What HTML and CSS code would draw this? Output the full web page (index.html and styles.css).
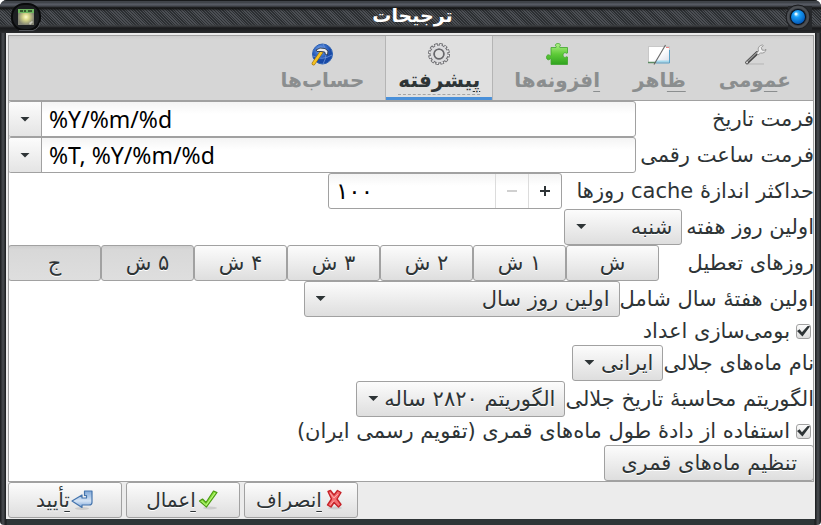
FILE: index.html
```html
<!DOCTYPE html>
<html lang="fa" dir="rtl">
<head>
<meta charset="utf-8">
<title>ترجیحات</title>
<link rel="stylesheet" href="styles.css">
</head>
<body>
<div class="window">
  <header class="titlebar">
    <button class="close" type="button" aria-label="بستن">
      <svg width="28" height="30" viewBox="0 0 28 30">
        <defs><radialGradient id="orb" cx=".4" cy=".3" r=".7"><stop offset="0" stop-color="#8fdcff"/><stop offset=".35" stop-color="#179bf5"/><stop offset="1" stop-color="#0358b8"/></radialGradient></defs>
        <path d="M4 4h24v24H4z" fill="#26282b"/>
        <circle cx="14" cy="15" r="12" fill="#393c40" stroke="#1b1c1f" stroke-width="1"/>
        <circle cx="14" cy="15" r="10" fill="none" stroke="#4c4f54" stroke-width="2"/>
        <circle cx="14" cy="15" r="8" fill="#08101c"/>
        <circle cx="14" cy="15" r="7" fill="url(#orb)"/>
        <circle cx="12" cy="12" r="1.5" fill="#e4f8ff"/>
      </svg>
    </button>
    <h1>ترجیحات</h1>
    <button class="menu" type="button" aria-label="منوی پنجره">
      <svg width="30" height="30" viewBox="0 0 30 30">
        <defs><radialGradient id="sun"><stop offset="0" stop-color="#fffbd0"/><stop offset=".35" stop-color="#dcdc8c"/><stop offset="1" stop-color="#828373"/></radialGradient></defs>
        <rect x="1" y="2" width="28" height="26" rx="12" fill="#1d1f22" stroke="#090a0b" stroke-width="2"/>
        <path d="M8 28.500h14q6-2 7-8" fill="none" stroke="#55585d"/>
        <rect x="7" y="7" width="16" height="16" fill="url(#sun)"/>
        <rect x="7" y="7" width="16" height="4" fill="#6cb45d"/>
        <path d="M9 9h3m1 0h2m2 0h4" stroke="#26401f" stroke-width="1.5"/>
        <path d="M18 21l3-2 1 1-3 3z" fill="#c9c9bd"/>
      </svg>
    </button>
  </header>

  <main class="content">
    <section class="notebook">
      <nav class="tabs" role="tablist">
        <button class="tab" type="button" role="tab">
          <svg width="24" height="24" viewBox="0 0 24 24"><path d="M4 22h17" stroke="#b5b5b5" stroke-width="1"/><path d="M4 20.500L14 11" stroke="#444" stroke-width="3.600" stroke-linecap="round"/><path d="M4 20L14 10.500" stroke="#999" stroke-width="1.200"/><path d="M13.500 11l2-2c-1-3 .5-5.500 4-6l.8.6-2 2 .8 2.500 2.400.2 1.500-1c0 3-3 4.200-5.500 3.700L15 13z" fill="#ededed" stroke="#888" stroke-width=".8"/><circle cx="4" cy="20.500" r="1" fill="#ddd"/></svg>
          <span>ع<u>م</u>ومی</span>
        </button>
        <button class="tab" type="button" role="tab">
          <svg width="24" height="24" viewBox="0 0 24 24"><defs><linearGradient id="pane" x2="1" y2="1"><stop offset=".5" stop-color="#fff"/><stop offset="1" stop-color="#d9dde8"/></linearGradient></defs><rect x="1.500" y="4.500" width="21" height="16" fill="url(#pane)" stroke="#c8c8c8"/><path d="M1 20.500h8" stroke="#5c8b63" stroke-width="1.500"/><path d="M9 19.500h13" stroke="#a4d8ec" stroke-width="2"/><path d="M22.500 8v13H9" fill="none" stroke="#5ba0c6"/><path d="M19 5.500h3" stroke="#e88"/><path d="M18.500 3L7 22.500" stroke="#666" stroke-width="1.100"/></svg>
          <span><u>ظ</u>اهر</span>
        </button>
        <button class="tab" type="button" role="tab">
          <svg width="24" height="24" viewBox="0 0 24 24"><defs><linearGradient id="puz" x2="0" y2="1"><stop offset="0" stop-color="#b0f088"/><stop offset=".5" stop-color="#5fcb38"/><stop offset="1" stop-color="#2fa31f"/></linearGradient></defs><path d="M6 5.500h5c1-1-.6-1-.6-2.300 0-2.200 5-2.200 5 0 0 1.300-1.600 1.300-.6 2.300H22.500v5.500c-1 1-1.500-.5-2.700-.3-2.300.4-2.300 4.300 0 4.700 1.200.2 1.700-1.400 2.700-.4v7.500H6v-5.500c-1-1-1 .8-2.500.8-2.700 0-2.700-5 0-5 1.500 0 1.500 1.700 2.500.7z" fill="url(#puz)" stroke="#3fa52c" stroke-width=".8"/></svg>
          <span><u>ا</u>فزونه‌ها</span>
        </button>
        <button class="tab active" type="button" role="tab" aria-selected="true">
          <svg width="24" height="24" viewBox="0 0 24 24"><circle cx="12" cy="12" r="9.500" fill="none" stroke="#6c6c70" stroke-width="3" stroke-dasharray="3.400 1.574"/><circle cx="12" cy="12" r="7" fill="none" stroke="#6c6c70" stroke-width="5"/><circle cx="12" cy="12" r="9.200" fill="none" stroke="#efeff0" stroke-width="1.800" stroke-dasharray="1.700 3.117" stroke-dashoffset="-.7"/><circle cx="12" cy="12" r="7" fill="none" stroke="#dcdcde" stroke-width="3"/><circle cx="12" cy="12" r="4.800" fill="none" stroke="#68686c" stroke-width="1.600"/></svg>
          <span><u>پ</u>یشرفته</span>
        </button>
        <button class="tab" type="button" role="tab">
          <svg width="24" height="24" viewBox="0 0 24 24"><defs><radialGradient id="globe" cx=".4" cy=".3"><stop offset="0" stop-color="#9abcf2"/><stop offset=".5" stop-color="#4176cf"/><stop offset="1" stop-color="#1849a6"/></radialGradient></defs><circle cx="12.500" cy="12" r="10" fill="url(#globe)" stroke="#2d62b4"/><path d="M3 14q9 5 19-1M13 2q6 10 0 20" fill="none" stroke="#6d94da" stroke-width=".8"/><path d="M3.500 21.500L11.500 10" stroke="#9b6d09" stroke-width="3.600" stroke-linecap="round"/><path d="M3.500 21.500L11.500 10" stroke="#f5c324" stroke-width="2.400" stroke-linecap="round"/><path d="M6 8l4-2 5 .5 3 2.500-.5 4-2-.5-.8-2.500-3.700-.5L7 9.500z" fill="#e9eaed" stroke="#29354a" stroke-width=".9"/></svg>
          <span>حساب‌ها</span>
        </button>
      </nav>

      <form class="page" id="prefs">
        <div class="formats">
          <label for="date">فرمت تاریخ</label>
          <div class="combo"><input id="date" type="text" dir="ltr" value="%Y/%m/%d"><button type="button" aria-label="فهرست فرمت تاریخ"><i class="arrow"></i></button></div>
          <label for="clock">فرمت ساعت رقمی</label>
          <div class="combo"><input id="clock" type="text" dir="ltr" value="%T, %Y/%m/%d"><button type="button" aria-label="فهرست فرمت ساعت"><i class="arrow"></i></button></div>
        </div>
        <div class="row">
          <label class="cache-label" for="cache">حداکثر اندازهٔ cache روزها</label>
          <div class="spin"><button type="button" aria-label="افزایش"><i class="plus"></i></button><button type="button" aria-label="کاهش" disabled><i class="minus"></i></button><input id="cache" type="text" dir="ltr" inputmode="numeric" value="۱۰۰"></div>
        </div>
        <div class="row">
          <label for="first-day">اولین روز هفته</label>
          <div class="select day"><select id="first-day"><option>شنبه</option></select><i class="arrow"></i></div>
        </div>
        <div class="row">
          <span id="holidays">روزهای تعطیل</span>
          <div class="days" role="group" aria-labelledby="holidays">
            <button type="button">ش</button><button type="button">۱ ش</button><button type="button">۲ ش</button><button type="button">۳ ش</button><button type="button">۴ ش</button><button type="button" aria-pressed="true">۵ ش</button><button type="button" aria-pressed="true">ج</button>
          </div>
        </div>
        <div class="row flush">
          <label for="first-week">اولین هفتهٔ سال شامل</label>
          <div class="select week"><select id="first-week"><option>اولین روز سال</option></select><i class="arrow"></i></div>
        </div>
        <label class="check"><input type="checkbox" checked>بومی‌سازی اعداد</label>
        <div class="row flush">
          <label for="months">نام ماه‌های جلالی</label>
          <div class="select months"><select id="months"><option>ایرانی</option></select><i class="arrow"></i></div>
        </div>
        <div class="row flush">
          <label for="algorithm">الگوریتم محاسبهٔ تاریخ جلالی</label>
          <div class="select algorithm"><select id="algorithm"><option>الگوریتم ۲۸۲۰ ساله</option></select><i class="arrow"></i></div>
        </div>
        <label class="check"><input type="checkbox" checked>استفاده از دادهٔ طول ماه‌های قمری (تقویم رسمی ایران)</label>
        <div class="row"><button class="button" type="button">تنظیم ماه‌های قمری</button></div>
      </form>
    </section>

    <footer class="actions">
      <button class="button" type="button"><svg width="24" height="24" viewBox="0 0 24 24"><ellipse cx="13" cy="20" rx="7" ry="1.500" fill="#ccc"/><path d="M6 3.500l2.500-1L12 7l3.500-4.500L19 4.500 15 11l4 5.500-2.500 2.500-4.500-4.500L9 19l-3.500-2L9.500 11z" fill="#f46d70" stroke="#c52127" stroke-width="1.400" stroke-linejoin="round"/><path d="M8 5l4 5 4-4M8.500 16.500l3.500-4" fill="none" stroke="#fba9a9"/></svg><span><u>ا</u>نصراف</span></button>
      <button class="button" type="button"><svg width="24" height="24" viewBox="0 0 24 24"><ellipse cx="14" cy="20" rx="7" ry="1.500" fill="#ccc"/><path d="M3.500 13l3-2 3.500 3.500L17.500 3l3.500 1.500L10.500 19z" fill="#8be43c" stroke="#4b9a14" stroke-width="1.200" stroke-linejoin="round"/><path d="M5.500 13l4.500 4.500L19 5" fill="none" stroke="#bcf588"/></svg><span><u>ا</u>عمال</span></button>
      <button class="button" type="button"><svg width="24" height="24" viewBox="0 0 24 24"><defs><linearGradient id="ret" x2="0" y2="1"><stop offset="0" stop-color="#7fa7d7"/><stop offset=".6" stop-color="#d5e4f5"/><stop offset="1" stop-color="#7ba5d8"/></linearGradient></defs><ellipse cx="12" cy="20.500" rx="7" ry="1.500" fill="#ccc"/><path d="M14.500 3H22v11.500q0 2.500-3 2.500h-7v2.500L2 13l10-6v3h4.500V7.500h-2z" fill="url(#ret)" stroke="#4474ad" stroke-width="1.200" stroke-linejoin="round"/></svg><span><u>ت</u>أیید</span></button>
    </footer>
  </main>
</div>
</body>
</html>
```

FILE: styles.css
```css
* { box-sizing: border-box; }

body {
  margin: 0;
  background: #fff;
  color: #2e3436;
  font: 21px/28px "DejaVu Sans", sans-serif;
}

button, input, select { font: inherit; color: inherit; margin: 0; }
button { cursor: default; }
svg { display: block; flex: none; }
u { text-underline-offset: 4px; text-decoration-thickness: 1px; }

.window {
  display: flex;
  flex-direction: column;
  min-height: 100vh;
  padding: 0 6px 6px;
  border-radius: 7px 7px 4px 4px;
  overflow: hidden;
  background: linear-gradient(90deg, #17191b, #4b4e52 3px, #17191b 6px, #2e3436 7px, #2e3436 calc(100% - 7px), #17191b calc(100% - 6px), #4b4e52 calc(100% - 3px), #17191b);
}

.titlebar {
  display: flex;
  align-items: center;
  justify-content: space-between;
  height: 33px;
  margin: 0 -6px;
  padding: 0 9px 0 11px;
  background:
    linear-gradient(#191b1d 0 1px, #40444a 1px 3px, #5b5f69 4px, #45484f 6px, #111 8px, transparent 11px, transparent 24px, #3a3c3f 26px, #17181a 28px, #2a2c2e 33px),
    repeating-linear-gradient(45deg, #4c4f54 0 1px, #2c2f32 1px 2px);
}
.titlebar h1 { margin: 0; padding-bottom: 3px; color: #fff; font-size: 19px; line-height: 28px; }
.titlebar button { padding: 0; border: 0; background: none; }

.content {
  flex: 1;
  display: flex;
  flex-direction: column;
  padding: 2px 1px 1px 2px;
  background: #ececec;
}

.notebook {
  flex: 1;
  border: 1px solid #a1a1a1;
  background: #fff;
}

.tabs {
  display: flex;
  gap: 9px;
  height: 65px;
  padding-right: 10px;
  border-bottom: 1px solid #a1a1a1;
  background: linear-gradient(#cdcdcd, #d6d6d6 4px);
}
.tab {
  display: flex;
  flex-direction: column;
  align-items: center;
  padding: 6px 12px 0;
  border: 0;
  background: none;
  color: #8b8e8f;
  font-size: 20px;
  font-weight: bold;
}
.tab span { line-height: 28px; }
.tab.active {
  border: solid #b5b5b5;
  border-width: 0 1px;
  background: linear-gradient(#4a90d9, #4a90d9) bottom / 100% 3px no-repeat #e0e0e0;
  color: #2e3436;
}
.tab.active span { border-bottom: 1px dashed #a5a5a5; }

.page { margin: 0 -1px -1px; }
.formats {
  display: grid;
  grid-template-columns: auto 1fr;
  column-gap: 4px;
  align-items: center;
}
.row { display: flex; align-items: center; gap: 4px; height: 36px; }
.row.flush { gap: 0; }
.cache-label { min-width: 248px; }

.combo, .spin {
  display: flex;
  height: 36px;
  border: 1px solid #a1a1a1;
  border-radius: 3px;
  overflow: hidden;
  background: linear-gradient(#f4f4f4, #fff 12px);
}
.combo input, .spin input {
  flex: 1;
  min-width: 0;
  padding: 0 7px;
  border: 0;
  outline: 0;
  background: none;
  color: #000;
  font-size: 23px;
  text-align: left;
}
.combo input { font-family: "Noto Sans", sans-serif; }
.combo button, .spin button {
  display: grid;
  place-items: center;
  width: 33px;
  padding: 0;
  border: 0;
  border-right: 1px solid #a1a1a1;
  background: linear-gradient(#fcfcfc, #e4e4e4);
}
.spin { width: 234px; }
.spin button { border-right: 0; border-left: 1px solid #dcdcdc; background: none; }

.arrow {
  width: 10px;
  height: 5px;
  background: #2e3436;
  clip-path: polygon(0 0, 100% 0, 50% 100%);
}
.plus, .minus {
  width: 10px;
  height: 10px;
  background: linear-gradient(#2e3436, #2e3436) center / 10px 2px no-repeat, linear-gradient(#2e3436, #2e3436) center / 2px 10px no-repeat;
}
.minus { background: linear-gradient(#d0d0d0, #d0d0d0) center / 10px 2px no-repeat; }

.select { position: relative; }
.select .arrow { position: absolute; left: 12px; top: 15px; pointer-events: none; }
.select select, .button, .days button {
  height: 36px;
  border: 1px solid #a1a1a1;
  border-radius: 3px;
  background: linear-gradient(#fcfcfc, #dedede);
  text-shadow: 0 1px #fff;
}
.select select { appearance: none; width: 100%; padding: 0 9px 0 24px; }
.day { width: 118px; }
.week { width: 316px; }
.months { width: 91px; }
.algorithm { width: 209px; }

.days { display: flex; flex: none; margin-right: auto; }
.days button { width: 93px; padding: 0; }
.days button[aria-pressed="true"] { background: linear-gradient(#cfcfcf, #d8d8d8 4px, #dedede); }

.check { display: flex; align-items: center; gap: 6px; height: 28px; padding-right: 3px; }
.check input {
  appearance: none;
  display: grid;
  place-items: center;
  width: 15px;
  height: 15px;
  border: 1px solid #a1a1a1;
  border-radius: 3px;
  background: linear-gradient(#fcfcfc, #dedede);
}
.check input:checked::before {
  content: "";
  width: 13px;
  height: 11px;
  background: #2e3436;
  clip-path: polygon(0 50%, 20% 35%, 38% 62%, 85% 0, 100% 8%, 42% 100%);
}

.button { display: flex; align-items: center; justify-content: center; padding: 0 16px; }
.actions { display: flex; justify-content: flex-end; gap: 4px; }
.actions .button { width: 114px; padding: 0; font-size: 20px; }
```
